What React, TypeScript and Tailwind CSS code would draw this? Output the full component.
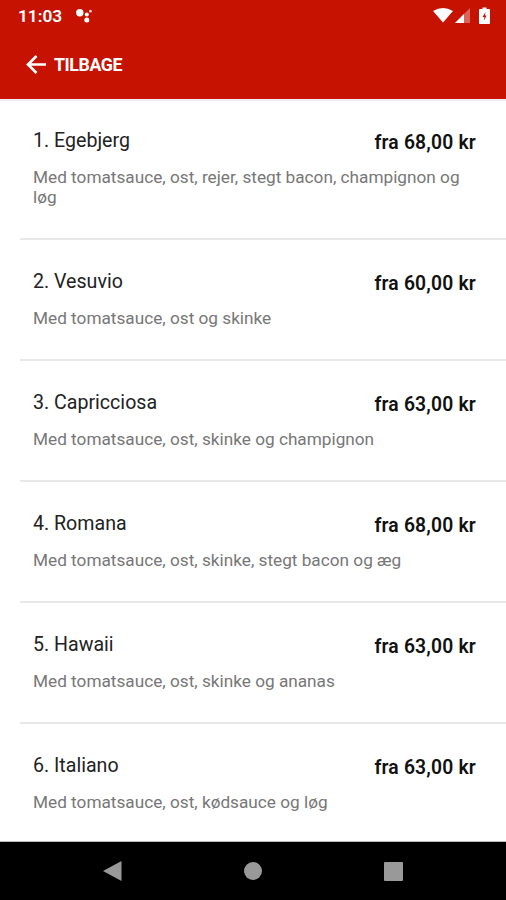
type Pizza = { name: string; price: string; description: string }

const pizzas: Pizza[] = [
  { name: '1. Egebjerg', price: '68,00', description: 'Med tomatsauce, ost, rejer, stegt bacon, champignon og løg' },
  { name: '2. Vesuvio', price: '60,00', description: 'Med tomatsauce, ost og skinke' },
  { name: '3. Capricciosa', price: '63,00', description: 'Med tomatsauce, ost, skinke og champignon' },
  { name: '4. Romana', price: '68,00', description: 'Med tomatsauce, ost, skinke, stegt bacon og æg' },
  { name: '5. Hawaii', price: '63,00', description: 'Med tomatsauce, ost, skinke og ananas' },
  { name: '6. Italiano', price: '63,00', description: 'Med tomatsauce, ost, kødsauce og løg' },
]

function StatusBar() {
  return (
    <div className="flex h-8 items-center justify-between pl-[18px] pr-4">
      <div className="flex items-center">
        <span className="text-[17.3px] font-semibold leading-8">11:03</span>
        <svg className="ml-3.5 h-4 w-4" viewBox="0 0 16 16" fill="currentColor">
          <circle cx="3.8" cy="4.8" r="3.7" />
          <circle cx="10.8" cy="6.5" r="2" />
          <circle cx="10.8" cy="12" r="2.5" />
          <circle cx="14.4" cy="3.2" r="1.4" opacity=".8" />
        </svg>
      </div>
      <div className="flex items-center">
        <svg className="h-4 w-5" viewBox="0 0 20 16" fill="currentColor">
          <path d="M0 3Q10-3 20 3L10 14.5Z" />
        </svg>
        <svg className="ml-0.5 h-4 w-4" viewBox="0 0 16 16" fill="currentColor">
          <path d="M15 0V15H0Z" opacity=".35" />
          <path d="M9 6V15H0Z" />
        </svg>
        <svg className="ml-2 h-[18px] w-[11px]" viewBox="0 0 11 18" fill="currentColor">
          <path
            fillRule="evenodd"
            d="M3.5 0.5h4v1.5H10q1 0 1 1v13q0 1-1 1H1q-1 0-1-1V3q0-1 1-1h2.5ZM6.5 5L3.5 10h1.8v3.5L7.5 8.5H6Z"
          />
        </svg>
      </div>
    </div>
  )
}

function PizzaRow({ pizza }: { pizza: Pizza }) {
  return (
    <li className="ml-5 border-b-2 border-[#e8e8e8] pb-[30.6px] pl-[13px] pr-[30px] pt-[29.2px]">
      <div className="flex justify-between">
        <h2 className="text-[19.6px] leading-[26px] text-[#222]">{pizza.name}</h2>
        <span className="pt-[2.3px] text-[19.3px] font-semibold leading-[26px] tracking-[0.2px] text-[#111]">
          fra {pizza.price} kr
        </span>
      </div>
      <p className="mt-[11px] text-[17.22px] leading-5 text-[#777]">{pizza.description}</p>
    </li>
  )
}

export default function App() {
  return (
    <div className="flex h-[900px] w-[506px] flex-col overflow-hidden bg-white font-[Roboto,sans-serif]">
      <header className="h-[98.5px] shrink-0 bg-[#c61200] text-white">
        <StatusBar />
        <button className="flex h-[65px] items-center pl-[26px]">
          <svg className="h-5 w-5" viewBox="0 0 20 20" fill="none" stroke="currentColor" strokeWidth="2.6">
            <path d="M20 9.5H2.5M10.5 1L2 9.5L10.5 18" />
          </svg>
          <span className="ml-2 pt-px text-[17.8px] font-bold tracking-[-0.45px]">TILBAGE</span>
        </button>
      </header>
      <ul className="min-h-0 flex-1 overflow-hidden border-t-2 border-[#eeedf1] [&>li:first-child]:-mt-0.5">
        {pizzas.map((pizza) => (
          <PizzaRow key={pizza.name} pizza={pizza} />
        ))}
      </ul>
      <nav className="flex h-[59px] shrink-0 items-center justify-between border-t border-[#bbb] bg-black px-[102px] text-[#999]">
        <svg className="h-5 w-5" viewBox="0 0 20 20" fill="currentColor">
          <path d="M19.5 0V20L1 10Z" />
        </svg>
        <span className="h-[18px] w-[18px] rounded-full bg-[#999]" />
        <span className="mr-px h-[19px] w-[19px] rounded-[1px] bg-[#999]" />
      </nav>
    </div>
  )
}
